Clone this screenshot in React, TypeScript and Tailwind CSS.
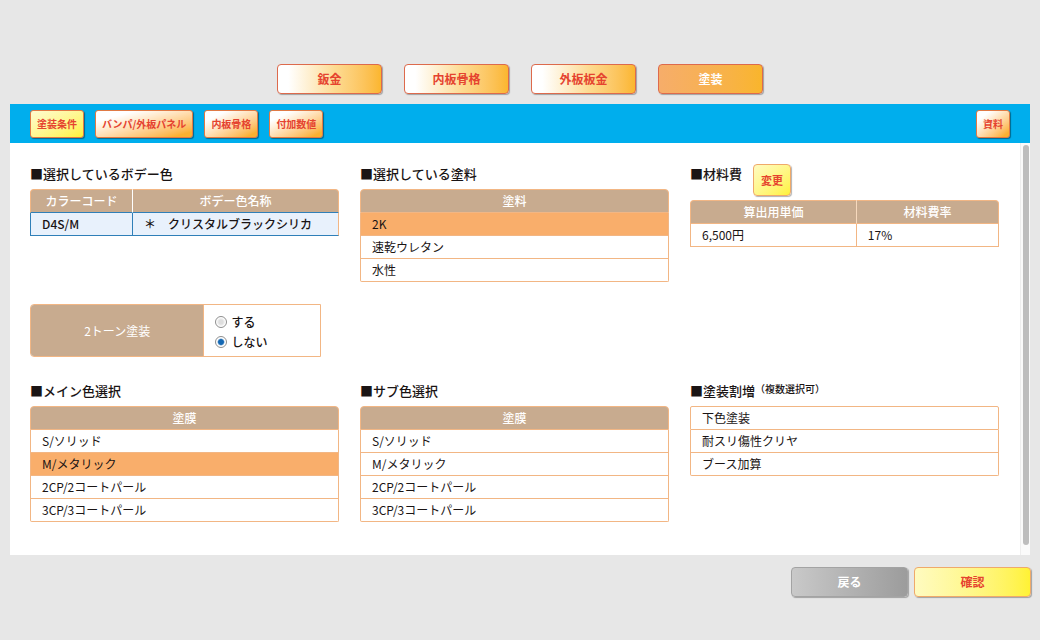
import React, { useState } from "react";
import clsx from "clsx";

const mainTabs = ["鈑金", "内板骨格", "外板板金", "塗装"];
const subTabs = ["塗装条件", "バンパ/外板パネル", "内板骨格", "付加数値"];
const paints = ["2K", "速乾ウレタン", "水性"];
const coatings = ["S/ソリッド", "M/メタリック", "2CP/2コートパール", "3CP/3コートパール"];
const surcharges = ["下色塗装", "耐スリ傷性クリヤ", "ブース加算"];

const headCell =
  "h-6 border-y bg-[#c8ab8f] px-[11px] text-center font-medium text-white first:rounded-tl first:border-l last:rounded-tr last:border-r";
const bodyCell = "h-[23px] border-b border-r px-[11px] first:border-l";

interface SectionProps {
  title: string;
  note?: string;
  action?: React.ReactNode;
  className?: string;
  children: React.ReactNode;
}

const Section: React.FC<SectionProps> = ({ title, note, action, className, children }) => (
  <section className={className}>
    <div className="mb-[3px] flex items-start">
      <h2 className="h-6 text-[13px] leading-6 font-medium">■{title}</h2>
      {note && <span className="text-[10px] leading-5 font-medium">{note}</span>}
      {action}
    </div>
    {children}
  </section>
);

interface SelectTableProps {
  label: string;
  header?: string;
  items: string[];
  selected: string[];
  onSelect: (item: string) => void;
}

const SelectTable: React.FC<SelectTableProps> = ({ label, header, items, selected, onSelect }) => (
  <table aria-label={label} className="w-full border-separate border-spacing-0">
    {header && (
      <thead>
        <tr>
          <th className={clsx(headCell, "border-[#f2b684]")}>{header}</th>
        </tr>
      </thead>
    )}
    <tbody>
      {items.map((item, index) => (
        <tr key={item}>
          <td
            className={clsx(
              "border-x border-b border-[#f2b684] p-0",
              !header && index === 0 && "rounded-t-xs border-t",
              index === items.length - 1 && "rounded-b-xs"
            )}
          >
            <button
              type="button"
              aria-pressed={selected.includes(item)}
              onClick={() => onSelect(item)}
              className={clsx(
                "block h-[22px] w-full px-[11px] text-left leading-[22px]",
                selected.includes(item) && "bg-[#f9ae6b]"
              )}
            >
              {item}
            </button>
          </td>
        </tr>
      ))}
    </tbody>
  </table>
);

export default function App() {
  const [mainTab, setMainTab] = useState("塗装");
  const [subTab, setSubTab] = useState("塗装条件");
  const [paint, setPaint] = useState("2K");
  const [twoTone, setTwoTone] = useState("しない");
  const [mainCoat, setMainCoat] = useState("M/メタリック");
  const [subCoat, setSubCoat] = useState("");
  const [extras, setExtras] = useState<string[]>([]);

  const toggleExtra = (item: string) => {
    setExtras((prev) => (prev.includes(item) ? prev.filter((e) => e !== item) : [...prev, item]));
  };

  return (
    <div className="min-h-screen bg-[#e7e7e7] pt-16 font-['Noto_Sans_CJK_JP',sans-serif] text-[12px] text-[#1a1414]">
      <nav className="flex justify-center gap-[22px]">
        {mainTabs.map((tab) => (
          <button
            key={tab}
            type="button"
            onClick={() => setMainTab(tab)}
            className={clsx(
              "h-[30px] w-[105px] rounded border border-[#dd6a4c] bg-linear-to-r font-bold shadow-[1px_1px_1px_#0000004d]",
              tab === mainTab
                ? "from-[#f6ad6a] to-[#f9b52b] text-white"
                : "from-white from-10% via-[#fddb92] via-55% to-[#fbb62d] text-[#e5432f]"
            )}
          >
            {tab}
          </button>
        ))}
      </nav>

      <main className="mx-2.5 mt-2.5 bg-white">
        <div className="flex h-[39px] items-center gap-[11px] bg-[#00aeed] px-5">
          {subTabs.map((tab) => (
            <button
              key={tab}
              type="button"
              onClick={() => setSubTab(tab)}
              className={clsx(
                "h-7 rounded-[3px] border border-[#e07a45] px-1.5 text-[10px] font-bold text-[#e5432f] shadow-[1px_1px_1px_#00000066]",
                tab === subTab
                  ? "bg-linear-to-br from-[#fffbd0] to-[#fff22e]"
                  : "bg-linear-to-br from-white from-20% to-[#fbb030] to-90%"
              )}
            >
              {tab}
            </button>
          ))}
          <button
            type="button"
            className="ml-auto h-7 rounded-[3px] border border-[#e07a45] bg-linear-to-br from-white from-20% to-[#fbb030] to-90% px-1.5 text-[10px] font-bold text-[#e5432f] shadow-[1px_1px_1px_#00000066]"
          >
            資料
          </button>
        </div>

        <div className="flex">
          <div className="grid flex-1 grid-cols-3 content-start gap-x-[21px] gap-y-[22px] pt-[19px] pr-[21px] pb-[33px] pl-5">
            <Section title="選択しているボデー色">
              <table className="w-full table-fixed border-separate border-spacing-0">
                <thead>
                  <tr>
                    <th className={clsx(headCell, "w-1/3 border-r border-t-[#f2b684] border-r-white border-b-[#2f7fb8] border-l-[#f2b684]")}>
                      カラーコード
                    </th>
                    <th className={clsx(headCell, "border-t-[#f2b684] border-r-[#f2b684] border-b-[#2f7fb8]")}>
                      ボデー色名称
                    </th>
                  </tr>
                </thead>
                <tbody>
                  <tr className="bg-[#e8f1fc] font-medium">
                    <td className={clsx(bodyCell, "border-[#2f7fb8]")}>D4S/M</td>
                    <td className={clsx(bodyCell, "border-r-[#f2b684] border-b-[#2f7fb8]")}>
                      ＊　クリスタルブラックシリカ
                    </td>
                  </tr>
                </tbody>
              </table>
            </Section>

            <Section title="選択している塗料">
              <SelectTable
                label="選択している塗料"
                header="塗料"
                items={paints}
                selected={[paint]}
                onSelect={setPaint}
              />
            </Section>

            <Section
              title="材料費"
              action={
                <button
                  type="button"
                  className="mt-0.5 mb-px ml-[11px] h-8 w-[38px] rounded border border-[#efa96a] bg-linear-to-br from-[#fffbc0] to-[#fff233] text-[11px] font-bold text-[#e5432f] shadow-[1px_1px_1px_#0000004d]"
                >
                  変更
                </button>
              }
            >
              <table className="w-full table-fixed border-separate border-spacing-0">
                <thead>
                  <tr>
                    <th className={clsx(headCell, "w-[54%] border-r border-y-[#f2b684] border-r-[#f7d9bd] border-l-[#f2b684]")}>
                      算出用単価
                    </th>
                    <th className={clsx(headCell, "border-[#f2b684]")}>材料費率</th>
                  </tr>
                </thead>
                <tbody>
                  <tr>
                    <td className={clsx(bodyCell, "border-[#f2b684]")}>6,500円</td>
                    <td className={clsx(bodyCell, "border-[#f2b684]")}>17%</td>
                  </tr>
                </tbody>
              </table>
            </Section>

            <fieldset
              aria-labelledby="two-tone"
              className="col-start-1 mr-[18px] flex h-[53px] rounded-l border border-[#f2b684]"
            >
              <div
                id="two-tone"
                className="flex w-3/5 items-center justify-center rounded-l-[3px] border-r border-[#f2b684] bg-[#c8ab8f] text-white"
              >
                2トーン塗装
              </div>
              <div className="flex flex-1 flex-col justify-center pt-0.5 pl-[11px]">
                {["する", "しない"].map((option) => (
                  <label key={option} className="flex h-5 items-center gap-1 font-medium">
                    <input
                      type="radio"
                      name="two-tone"
                      value={option}
                      checked={twoTone === option}
                      onChange={() => setTwoTone(option)}
                      className="size-3 appearance-none rounded-full border border-[#8e8e8e] bg-[radial-gradient(circle,#dedede_30%,#ffffff_65%)] checked:bg-[radial-gradient(circle,#1568b3_35%,#ffffff_55%)]"
                    />
                    {option}
                  </label>
                ))}
              </div>
            </fieldset>

            <Section title="メイン色選択" className="col-start-1">
              <SelectTable
                label="メイン色選択"
                header="塗膜"
                items={coatings}
                selected={[mainCoat]}
                onSelect={setMainCoat}
              />
            </Section>

            <Section title="サブ色選択">
              <SelectTable
                label="サブ色選択"
                header="塗膜"
                items={coatings}
                selected={[subCoat]}
                onSelect={setSubCoat}
              />
            </Section>

            <Section title="塗装割増" note="（複数選択可）">
              <SelectTable
                label="塗装割増"
                items={surcharges}
                selected={extras}
                onSelect={toggleExtra}
              />
            </Section>
          </div>

          {/* scroll bar */}
          <div className="flex w-2.5 justify-center border-l border-[#eeeeee] bg-[#fafafa] pt-0.5 pb-2.5">
            <div className="w-1.5 rounded-full bg-[#bdbdbd]" />
          </div>
        </div>
      </main>

      <footer className="flex justify-end gap-1.5 pt-3 pr-[9px]">
        <button
          type="button"
          className="h-[30px] w-[117px] rounded border border-[#a3a3a3] bg-linear-to-r from-[#c9c9c9] to-[#9c9c9c] font-bold text-white shadow-[1px_1px_1px_#0000004d]"
        >
          戻る
        </button>
        <button
          type="button"
          className="h-[30px] w-[117px] rounded border border-[#efa96a] bg-linear-to-r from-[#fffbc0] to-[#fff233] font-bold text-[#e5432f] shadow-[1px_1px_1px_#0000004d]"
        >
          確認
        </button>
      </footer>
    </div>
  );
}
